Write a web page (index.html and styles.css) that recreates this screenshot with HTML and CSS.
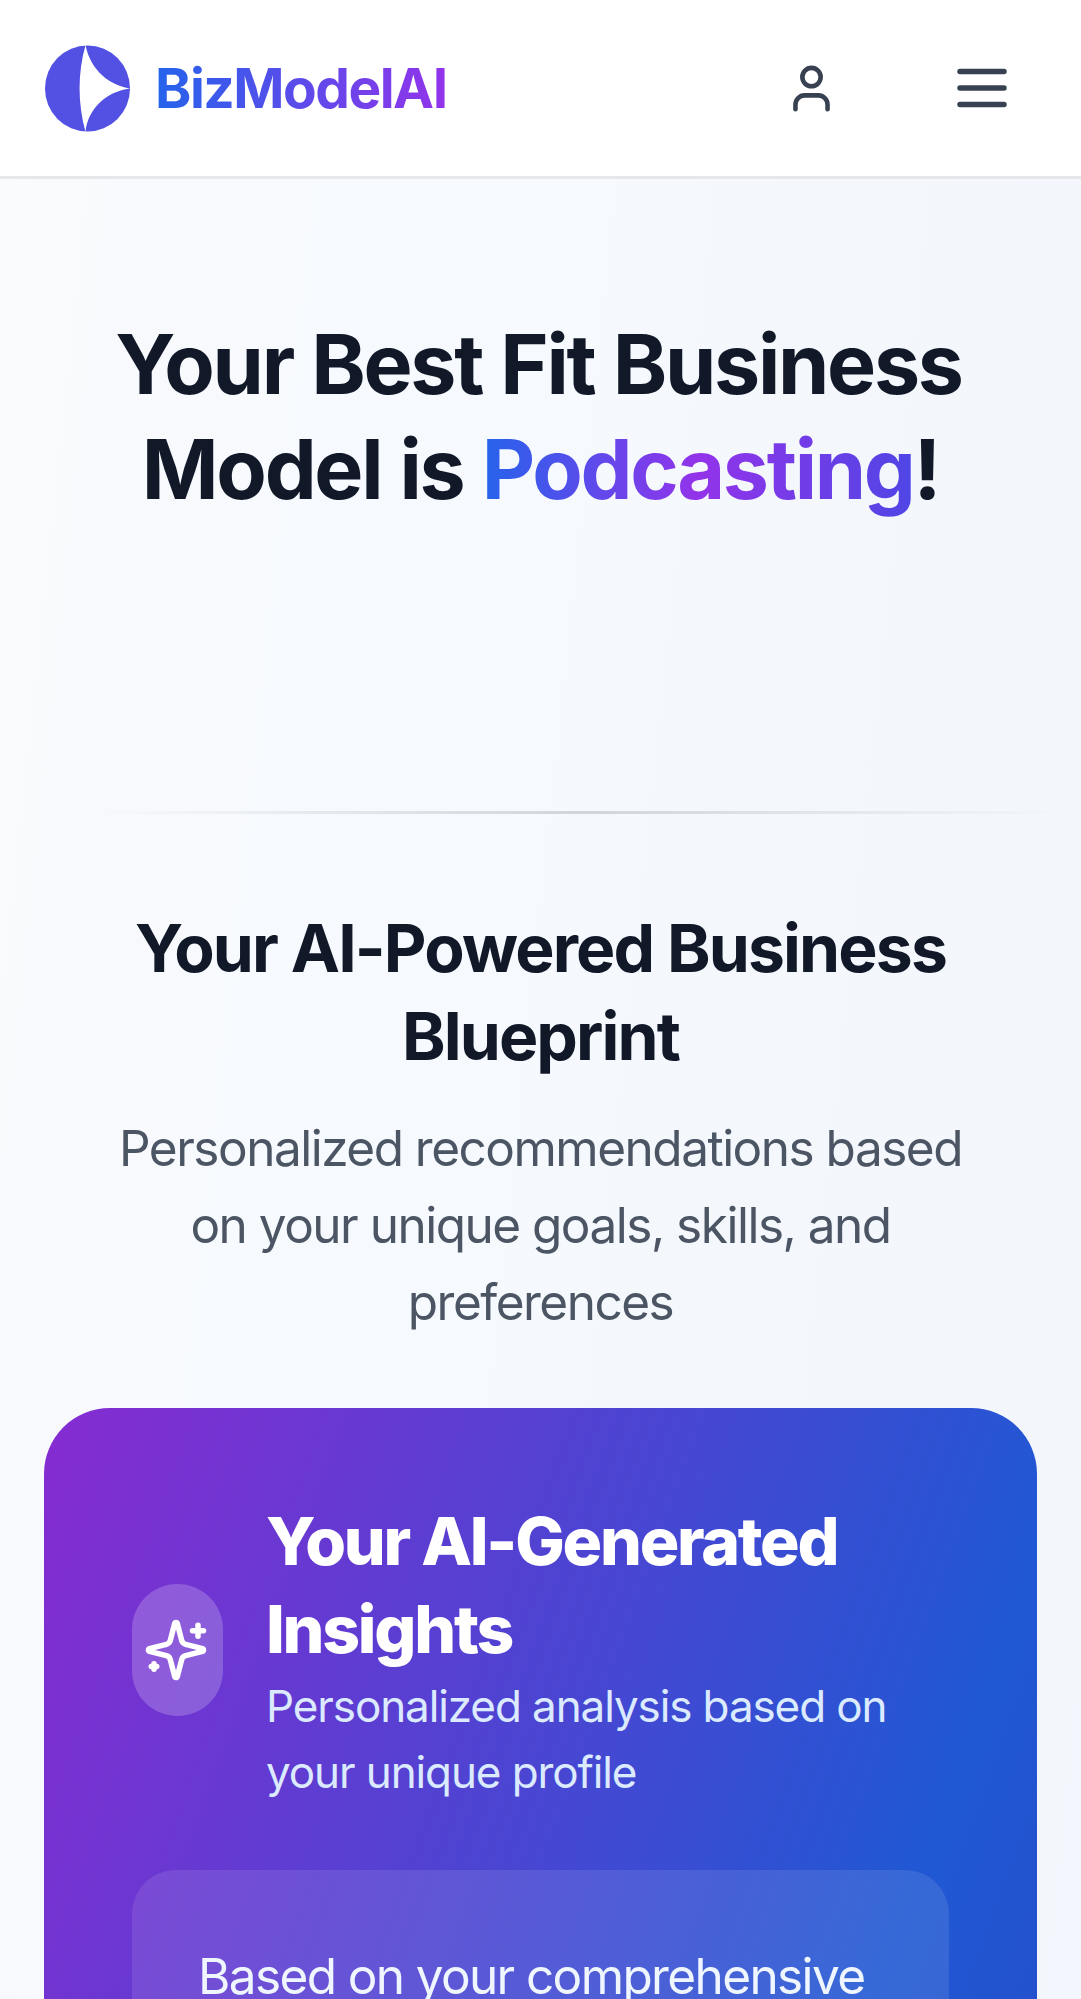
FILE: index.html
```html
<!DOCTYPE html>
<html lang="en">
<head>
<meta charset="utf-8">
<title>BizModelAI</title>
<link rel="stylesheet" href="styles.css">
</head>
<body>
<header class="header">
  <a class="brand">
    <svg class="logo" viewBox="0 0 86 88"><ellipse cx="43" cy="44" rx="43" ry="43.5" fill="#5350e4"/><path d="M41 0C33 29 33 58 41 88C43 65 62 47 86 44C66 41 46 26 41 0Z" fill="#fff"/></svg>
    <span class="brand-name">BizModelAI</span>
  </a>
  <nav class="actions">
    <svg class="user-icon" viewBox="0 0 24 24"><circle cx="12" cy="7" r="4"/><path d="M19 21v-2a4 4 0 0 0-4-4H9a4 4 0 0 0-4 4v2"/></svg>
    <svg class="menu-icon" viewBox="0 0 24 24"><path d="M4 6h16M4 12h16M4 18h16"/></svg>
  </nav>
</header>
<main class="page">
  <h1 class="title">Your Best Fit Business<br>Model is <span class="accent">Podcasting</span>!</h1>
  <div class="divider"></div>
  <section class="intro">
    <h2 class="intro-title">Your AI-Powered Business<br>Blueprint</h2>
    <p class="intro-text">Personalized recommendations based<br>on your unique goals, skills, and<br>preferences</p>
  </section>
  <section class="card">
    <div class="card-head">
      <div class="badge"><svg class="sparkles" viewBox="0 0 24 24"><path d="M9.937 15.5A2 2 0 0 0 8.5 14.063l-6.135-1.582a.5.5 0 0 1 0-.962L8.5 9.936A2 2 0 0 0 9.937 8.5l1.582-6.135a.5.5 0 0 1 .963 0L14.063 8.5A2 2 0 0 0 15.5 9.937l6.135 1.581a.5.5 0 0 1 0 .964L15.5 14.063a2 2 0 0 0-1.437 1.437l-1.582 6.135a.5.5 0 0 1-.963 0z"/><path d="M20 3v4M22 5h-4M4 17v2M5 18H3"/></svg></div>
      <div class="card-text">
        <h3 class="card-title">Your AI-Generated<br>Insights</h3>
        <p class="card-sub">Personalized analysis based on<br>your unique profile</p>
      </div>
    </div>
    <div class="panel">Based on your comprehensive</div>
  </section>
</main>
</body>
</html>
```

FILE: styles.css
```css
* { box-sizing: border-box; margin: 0; padding: 0; }
body {
  height: 1999px;
  overflow: hidden;
  font-family: Inter, "Liberation Sans", sans-serif;
  color: #111827;
  background: #f7fafd;
}
svg { display: block; flex: none; }
.header {
  height: 179px;
  padding: 0 66px 0 44px;
  display: flex;
  align-items: center;
  justify-content: space-between;
  background: #fff;
  border-bottom: 3px solid #e5e7eb;
}
.brand { display: flex; align-items: center; gap: 24px; }
.logo { width: 87px; height: 87px; }
.brand-name {
  font-size: 55px;
  line-height: 77px;
  font-weight: 700;
  letter-spacing: -1.5px;
  color: transparent;
  background: linear-gradient(90deg, #2563eb, #9333ea);
  background-clip: text;
}
.actions { display: flex; align-items: center; gap: 110px; }
.actions svg { fill: none; stroke: #374151; stroke-width: 2; stroke-linecap: round; stroke-linejoin: round; }
.user-icon { width: 55px; height: 55px; }
.menu-icon { width: 66px; height: 66px; }
.page {
  height: 1820px;
  padding: 133px 44px 0;
  overflow: hidden;
  background: linear-gradient(96deg, #fafbfc 0%, #f8f9fd 15%, #f6fafe 32%, #f6fafe 48%, #f4f7fc 62%, #f3f6fc 100%);
}
.title {
  text-align: center;
  font-size: 82.5px;
  line-height: 105px;
  font-weight: 700;
  letter-spacing: -2.3px;
  word-spacing: 1px;
  text-indent: -4px;
}
.accent {
  color: transparent;
  background: linear-gradient(90deg, #2563eb, #9333ea 50%, #4f46e5);
  background-clip: text;
}
.divider {
  height: 3px;
  margin: 289px -33px 0 55px;
  background: linear-gradient(90deg, transparent, #d1d5db, transparent);
}
.intro { margin-top: 90px; text-align: center; }
.intro-title { font-size: 66px; line-height: 88px; font-weight: 700; letter-spacing: -1.87px; }
.intro-text { margin-top: 30px; font-size: 49.5px; line-height: 77px; letter-spacing: -1.5px; color: #4b5563; }
.card {
  height: 700px;
  margin-top: 67px;
  padding: 88px;
  border-radius: 66px;
  color: #fff;
  background: linear-gradient(110deg, #862bd1 0%, #4b45d2 49%, #2058d3 84%, #2550cd 100%);
}
.card-head { display: flex; align-items: center; gap: 43px; }
.card-text { padding-top: 1px; margin-bottom: -1px; }
.badge { flex: none; width: 91px; height: 132px; padding: 33px 11px; border-radius: 46px; background: rgba(255,255,255,.2); }
.sparkles { width: 66px; height: 66px; fill: none; stroke: #fff; stroke-width: 2; stroke-linecap: round; stroke-linejoin: round; }
.card-title { font-size: 66px; line-height: 88px; font-weight: 800; letter-spacing: -2.25px; }
.card-sub { font-size: 44px; line-height: 66px; letter-spacing: -1.1px; color: #dbeafe; }
.panel {
  height: 300px;
  margin-top: 66px;
  padding: 66px;
  border-radius: 44px;
  font-size: 49.5px;
  line-height: 80px;
  letter-spacing: -1.62px;
  white-space: nowrap;
  color: #eff6ff;
  background: rgba(255,255,255,.1);
}
```
